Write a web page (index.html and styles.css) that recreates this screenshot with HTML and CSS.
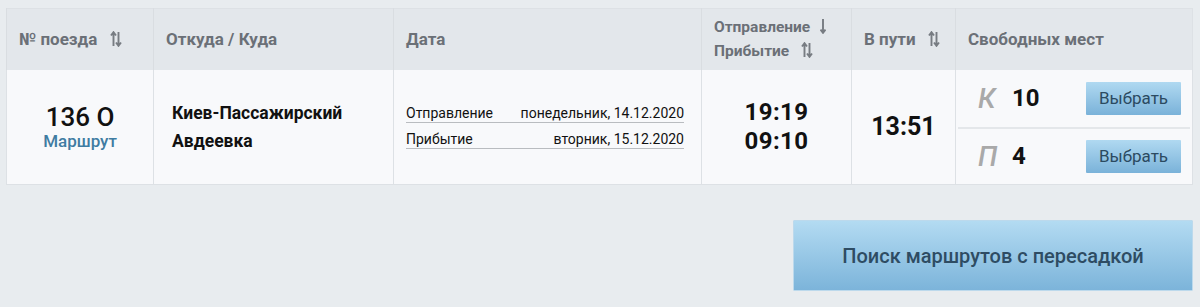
FILE: index.html
```html
<!DOCTYPE html>
<html lang="ru">
<head>
    <meta charset="UTF-8">
    <title>Поезда</title>
    <link rel="stylesheet" href="styles.css">
</head>
<body>
    <table class="trains">
        <colgroup>
            <col class="c-num">
            <col class="c-route">
            <col class="c-date">
            <col class="c-time">
            <col class="c-way">
            <col class="c-seats">
        </colgroup>
        <thead>
            <tr>
                <th>№ поезда <svg class="sort" viewBox="0 0 12 16"><path d="M3.5 15V1.5M1 4.5l2.5-3.3L6 4.5M8.5 1v13.5M6 11.5l2.5 3.3 2.5-3.3"/></svg></th>
                <th>Откуда / Куда</th>
                <th>Дата</th>
                <th class="two">
                    <div>Отправление <svg class="sort single" viewBox="0 0 6 16"><path d="M3 1v13.5M.5 11.5L3 14.8l2.5-3.3"/></svg></div>
                    <div>Прибытие <svg class="sort" viewBox="0 0 12 16"><path d="M3.5 15V1.5M1 4.5l2.5-3.3L6 4.5M8.5 1v13.5M6 11.5l2.5 3.3 2.5-3.3"/></svg></div>
                </th>
                <th>В пути <svg class="sort" viewBox="0 0 12 16"><path d="M3.5 15V1.5M1 4.5l2.5-3.3L6 4.5M8.5 1v13.5M6 11.5l2.5 3.3 2.5-3.3"/></svg></th>
                <th>Свободных мест</th>
            </tr>
        </thead>
        <tbody>
            <tr>
                <td class="num">
                    <div class="train">136 О</div>
                    <a class="route-link" href="#">Маршрут</a>
                </td>
                <td class="route">
                    <div>Киев-Пассажирский</div>
                    <div>Авдеевка</div>
                </td>
                <td class="date">
                    <div class="date-row"><span>Отправление</span><span>понедельник, 14.12.2020</span></div>
                    <div class="date-row"><span>Прибытие</span><span>вторник, 15.12.2020</span></div>
                </td>
                <td class="big times">
                    <div>19:19</div>
                    <div>09:10</div>
                </td>
                <td class="big">13:51</td>
                <td class="seats">
                    <div class="seat-row">
                        <span class="kind">К</span>
                        <span class="count">10</span>
                        <button class="pick">Выбрать</button>
                    </div>
                    <div class="seat-row">
                        <span class="kind">П</span>
                        <span class="count">4</span>
                        <button class="pick">Выбрать</button>
                    </div>
                </td>
            </tr>
        </tbody>
    </table>
    <div class="actions">
        <button class="transfer">Поиск маршрутов с пересадкой</button>
    </div>
</body>
</html>
```

FILE: styles.css
```css
* {
    margin: 0;
    padding: 0;
    box-sizing: border-box;
}
body {
    padding: 8px 0 0 6px;
    width: 1200px;
    background: #e8ecef;
    font-family: Roboto, "Liberation Sans", sans-serif;
    color: #111;
}
.trains {
    width: 1186px;
    table-layout: fixed;
    border-collapse: collapse;
    border: 1px solid #dde1e5;
}
.c-num { width: 147px; }
.c-route { width: 240px; }
.c-date { width: 308px; }
.c-time { width: 150px; }
.c-way { width: 104px; }
.c-seats { width: 237px; }
th {
    height: 61px;
    padding: 0 12px;
    background: #e3e7eb;
    border-left: 1px solid #d9dde1;
    text-align: left;
    font-size: 17px;
    font-weight: 700;
    color: #6b7077;
    white-space: nowrap;
}
th.two {
    font-size: 15.5px;
}
th.two div {
    line-height: 24px;
}
.sort {
    width: 12px;
    height: 16px;
    margin-left: 8px;
    vertical-align: -2px;
    fill: none;
    stroke: #777c82;
    stroke-width: 1.9;
}
.sort.single {
    width: 6px;
    margin-left: 6px;
}
td {
    height: 115px;
    background: #f8f9fb;
    border-left: 1px solid #dde1e5;
    vertical-align: middle;
}
.num {
    text-align: center;
}
.train {
    font-size: 26px;
    font-weight: 500;
    line-height: 28px;
}
.route-link {
    font-size: 17px;
    font-weight: 500;
    color: #3f7ca2;
    text-decoration: none;
}
.route {
    padding: 0 18px;
    font-size: 17.5px;
    font-weight: 700;
    line-height: 28px;
}
.date {
    padding: 0 17px 0 12px;
}
.date-row {
    display: flex;
    justify-content: space-between;
    font-size: 14px;
    line-height: 18px;
    margin: 7px 0 0;
    border-bottom: 1px solid #b9bcc0;
}
.date-row:first-child {
    margin-top: 0;
}
.big {
    text-align: center;
    font-size: 25px;
    font-weight: 700;
    line-height: 25px;
}
.times {
    font-size: 24px;
    line-height: 28.5px;
    letter-spacing: 0.4px;
}
.seats {
    padding: 0 2px;
}
.seat-row {
    display: flex;
    align-items: center;
    height: 57px;
    padding: 0 9px 0 20px;
}
.seat-row + .seat-row {
    border-top: 2px solid #e4e7ea;
}
.kind {
    width: 34px;
    font-size: 28px;
    font-style: italic;
    font-weight: 500;
    color: #a9a9a9;
}
.count {
    flex: 1;
    font-size: 24px;
    font-weight: 700;
}
.pick {
    width: 95px;
    height: 33px;
    border: 0;
    border-radius: 1px;
    background: linear-gradient(#b0d9f1, #7ab2d9);
    font-family: Roboto, "Liberation Sans", sans-serif;
    font-size: 17px;
    color: #2b4a61;
}
.actions {
    display: flex;
    justify-content: flex-end;
    width: 1187px;
    margin-top: 35px;
}
.transfer {
    width: 400px;
    height: 71px;
    border: 1px solid #bcd9ec;
    border-radius: 1px;
    background: linear-gradient(#b3dbf2, #7cb4da);
    font-family: Roboto, "Liberation Sans", sans-serif;
    font-size: 20px;
    font-weight: 500;
    color: #2e4c63;
}
```
